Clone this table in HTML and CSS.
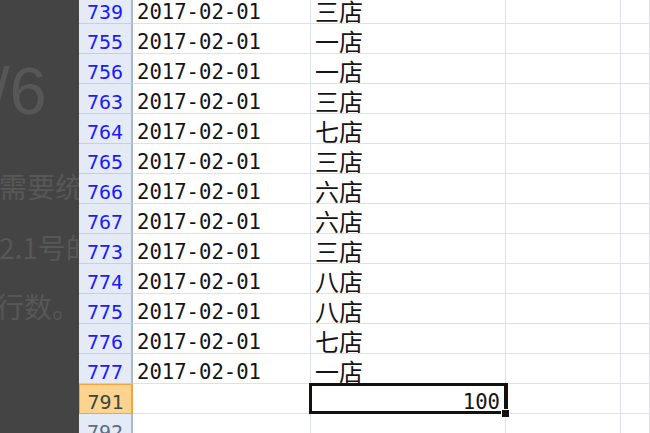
FILE: index.html
```html
<!DOCTYPE html>
<html lang="zh">
<head>
<meta charset="utf-8">
<title>Sheet</title>
<link rel="stylesheet" href="styles.css">
</head>
<body>
<div class="page">
  <aside class="backdrop">
    <div class="big">/6</div>
    <p class="line l1">需要统</p>
    <p class="line l2">2.1号的</p>
    <p class="line l3">行数。</p>
  </aside>
  <main class="sheet">
    <div class="row first"><div class="hd">739</div><div class="cell date">2017-02-01</div><div class="cell store">三店</div><div class="cell"></div><div class="cell"></div></div>
    <div class="row"><div class="hd">755</div><div class="cell date">2017-02-01</div><div class="cell store">一店</div><div class="cell"></div><div class="cell"></div></div>
    <div class="row"><div class="hd">756</div><div class="cell date">2017-02-01</div><div class="cell store">一店</div><div class="cell"></div><div class="cell"></div></div>
    <div class="row"><div class="hd">763</div><div class="cell date">2017-02-01</div><div class="cell store">三店</div><div class="cell"></div><div class="cell"></div></div>
    <div class="row"><div class="hd">764</div><div class="cell date">2017-02-01</div><div class="cell store">七店</div><div class="cell"></div><div class="cell"></div></div>
    <div class="row"><div class="hd">765</div><div class="cell date">2017-02-01</div><div class="cell store">三店</div><div class="cell"></div><div class="cell"></div></div>
    <div class="row"><div class="hd">766</div><div class="cell date">2017-02-01</div><div class="cell store">六店</div><div class="cell"></div><div class="cell"></div></div>
    <div class="row"><div class="hd">767</div><div class="cell date">2017-02-01</div><div class="cell store">六店</div><div class="cell"></div><div class="cell"></div></div>
    <div class="row"><div class="hd">773</div><div class="cell date">2017-02-01</div><div class="cell store">三店</div><div class="cell"></div><div class="cell"></div></div>
    <div class="row"><div class="hd">774</div><div class="cell date">2017-02-01</div><div class="cell store">八店</div><div class="cell"></div><div class="cell"></div></div>
    <div class="row"><div class="hd">775</div><div class="cell date">2017-02-01</div><div class="cell store">八店</div><div class="cell"></div><div class="cell"></div></div>
    <div class="row"><div class="hd">776</div><div class="cell date">2017-02-01</div><div class="cell store">七店</div><div class="cell"></div><div class="cell"></div></div>
    <div class="row"><div class="hd">777</div><div class="cell date">2017-02-01</div><div class="cell store">一店</div><div class="cell"></div><div class="cell"></div></div>
    <div class="row"><div class="hd active">791</div><div class="cell date"></div><div class="cell num selected">100<span class="sel-box"></span><span class="handle"></span></div><div class="cell"></div><div class="cell"></div></div>
    <div class="row"><div class="hd plain">792</div><div class="cell"></div><div class="cell"></div><div class="cell"></div><div class="cell"></div></div>
  </main>
</div>
</body>
</html>
```
FILE: styles.css
```css
html, body {
  margin: 0;
  padding: 0;
  height: 100%;
  overflow: hidden;
  background: #444444;
}

.page {
  display: flex;
  height: 433px;
  width: 650px;
}

.backdrop {
  width: 79px;
  flex: 0 0 79px;
  overflow: hidden;
  background: #444444;
  color: #575757;
  font-family: "Noto Sans CJK SC", "Noto Sans", sans-serif;
}

.big {
  font-family: "Liberation Sans", Arial, sans-serif;
  font-size: 67px;
  line-height: 70px;
  margin: 56px 0 0 -9px;
  white-space: nowrap;
}

.line {
  font-size: 28px;
  line-height: 40px;
  margin: 0;
  white-space: nowrap;
}

.l1 { margin-top: 40px; margin-left: -1px; }
.l2 { margin-top: 21px; margin-left: -1px; }
.l3 { margin-top: 19px; margin-left: -4px; }

.sheet {
  flex: 1;
  background: #ffffff;
  overflow: hidden;
}

.row {
  display: grid;
  grid-template-columns: 54px 178px 195px 115px 1fr;
  height: 30px;
}

.row.first {
  margin-top: -6px;
}

.hd {
  box-sizing: border-box;
  background: #e4ebf6;
  border-right: 2px solid #a9bbd1;
  border-bottom: 1px solid #c3d0e2;
  color: #1a1aff;
  font-family: "DejaVu Sans Mono", "Liberation Mono", monospace;
  font-size: 20px;
  text-align: center;
  padding-top: 7px;
  line-height: 22px;
}

.hd.active {
  background: #fdd48f;
  border: 1px solid #f3a43f;
  border-right: 2px solid #f3a43f;
  color: #3b473c;
  padding-top: 6px;
}

.hd.plain {
  color: #5d6e80;
}

.cell {
  box-sizing: border-box;
  border-right: 1px solid #dbe1ee;
  border-bottom: 1px solid #dbe1ee;
  color: #141414;
  white-space: nowrap;
}

.date, .num {
  font-family: "DejaVu Sans Mono", "Liberation Mono", monospace;
  font-size: 20.6px;
  padding: 8px 0 0 4px;
  line-height: 21px;
}

.store {
  font-family: "Noto Sans CJK SC", "Noto Sans", sans-serif;
  font-size: 24px;
  line-height: 24px;
  padding: 5px 0 0 4px;
  overflow: visible;
}

.num {
  text-align: right;
  padding-right: 5px;
}

.selected {
  position: relative;
}

.sel-box {
  position: absolute;
  left: -2px;
  right: -3px;
  top: -1px;
  bottom: -1px;
  border: 3px solid #14120f;
  border-right-width: 4px;
}

.handle {
  position: absolute;
  right: -4px;
  bottom: -4px;
  width: 7px;
  height: 7px;
  background: #14120f;
  box-shadow: 0 0 0 1px #ffffff;
}
```
